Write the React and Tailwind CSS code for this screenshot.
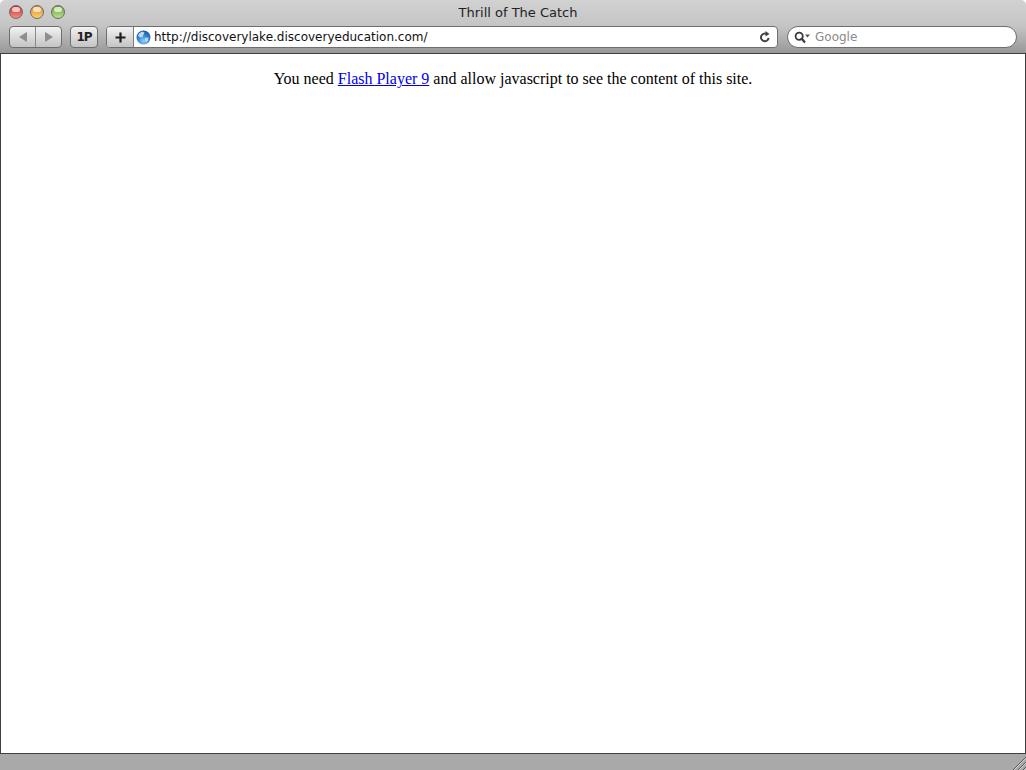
import React from 'react';

const chrome = { fontFamily: '"DejaVu Sans", sans-serif' };

const Light = ({ className }) => (
  <div className={`relative w-[14px] h-[14px] rounded-full border border-[#6b6b6b] ${className}`}>
    <div className="absolute left-[2px] top-[1px] w-[8px] h-[5px] rounded-full bg-white/70" />
  </div>
);

const Globe = () => (
  <svg width="15" height="15" viewBox="0 0 15 15" className="shrink-0">
    <defs>
      <radialGradient id="globe" cx="0.5" cy="0.75" r="0.8">
        <stop offset="0" stopColor="#8fd0f5" />
        <stop offset="0.55" stopColor="#2b7fd0" />
        <stop offset="1" stopColor="#14509a" />
      </radialGradient>
    </defs>
    <circle cx="7.5" cy="7.5" r="7" fill="url(#globe)" />
    <path d="M3 3.5 L6 1.5 L8.5 2.5 L7.5 4.5 L6.5 7 L4.5 7.5 L2 6 Z" fill="#dfe6ee" opacity="0.85" />
    <path d="M9 8 L12.5 7.5 L12 10.5 L10 12.5 L9 10.5 Z" fill="#dfe6ee" opacity="0.75" />
  </svg>
);

const App = () => {
  return (
    <div className="w-[1026px] h-[770px] flex flex-col overflow-hidden bg-white" style={chrome}>
      {/* window top: title + toolbar */}
      <div className="h-[54px] shrink-0 flex flex-col rounded-t-[5px] border-b border-[#3f3f3f] bg-gradient-to-b from-[#d2d2d2] via-[#c4c4c4] to-[#989898]">
        <div className="h-[24px] shrink-0 grid grid-cols-[1fr_auto_1fr] items-center pl-[9px]">
          <div className="flex gap-[7px]">
            <Light className="bg-gradient-to-b from-[#c8272d] to-[#f58a80]" />
            <Light className="bg-gradient-to-b from-[#d98a1c] to-[#fbd26a]" />
            <Light className="bg-gradient-to-b from-[#66a032] to-[#b9e08a]" />
          </div>
          <div className="text-[13px] leading-none text-[#222] pl-[1px]">Thrill of The Catch</div>
          <div />
        </div>

        <div className="flex items-center h-[24px] pl-[9px] pr-[9px] mt-[1px]">
          {/* back / forward */}
          <div className="flex w-[53px] h-[22px] rounded-[4px] border border-[#6e6e6e] bg-gradient-to-b from-[#f2f2f2] to-[#c4c4c4]">
            <div className="flex-1 flex items-center justify-center border-r border-[#8a8a8a]">
              <div className="w-0 h-0 border-y-[5px] border-y-transparent border-r-[8px] border-r-[#8e8e8e]" />
            </div>
            <div className="flex-1 flex items-center justify-center">
              <div className="w-0 h-0 border-y-[5px] border-y-transparent border-l-[8px] border-l-[#8e8e8e]" />
            </div>
          </div>

          <div className="ml-[8px] w-[28px] h-[22px] flex items-center justify-center rounded-[4px] border border-[#6e6e6e] bg-gradient-to-b from-[#f2f2f2] to-[#c4c4c4] text-[12px] font-bold tracking-[-1px] text-[#222]">
            1P
          </div>

          {/* address bar */}
          <div className="ml-[8px] w-[672px] h-[22px] flex rounded-[4px] border border-[#6e6e6e] bg-white overflow-hidden">
            <div className="w-[27px] shrink-0 flex items-center justify-center border-r border-[#7c7c7c] bg-gradient-to-b from-[#f2f2f2] to-[#c4c4c4]">
              <svg width="11" height="11" viewBox="0 0 11 11">
                <path d="M5.5 0.5 V10.5 M0.5 5.5 H10.5" stroke="#1c1c1c" strokeWidth="2.2" fill="none" />
              </svg>
            </div>
            <div className="flex-1 flex items-center pl-[2px] pr-[6px]">
              <Globe />
              <span className="ml-[3px] text-[12px] text-[#111] flex-1 whitespace-nowrap">http://discoverylake.discoveryeducation.com/</span>
              <svg width="12" height="12" viewBox="0 0 12 12">
                <path d="M9.6 6.8 A3.8 3.8 0 1 1 7.4 2.9" stroke="#444" strokeWidth="2" fill="none" />
                <path d="M6.5 0 L10.5 3 L6.5 5.5 Z" fill="#444" />
              </svg>
            </div>
          </div>

          {/* search */}
          <div className="ml-[9px] flex-1 h-[22px] flex items-center rounded-full border border-[#6e6e6e] bg-white pl-[6px]">
            <svg width="16" height="13" viewBox="0 0 16 13">
              <circle cx="5.2" cy="5.2" r="3.6" stroke="#3a3a3a" strokeWidth="1.8" fill="none" />
              <path d="M8 8 L11 11.5" stroke="#3a3a3a" strokeWidth="2.2" />
              <path d="M11 3.5 H16 L13.5 6.5 Z" fill="#555" />
            </svg>
            <span className="ml-[5px] text-[12px] text-[#8a8a8a]">Google</span>
          </div>
        </div>
      </div>

      {/* page */}
      <div className="flex-1 border-x border-[#3f3f3f] bg-white text-center text-black pt-[15px]" style={{ fontFamily: '"Liberation Serif", serif' }}>
        <p className="text-[16px] leading-[20px]">
          You need <a href="#" className="text-[#0000ee] underline">Flash Player 9</a> and allow javascript to see the content of this site.
        </p>
      </div>

      {/* status bar */}
      <div className="h-[17px] shrink-0 flex justify-end border-t border-[#3f3f3f] bg-[#a9a9a9]">
        <svg width="14" height="14" viewBox="0 0 14 14" className="self-end">
          <path d="M1 14 L14 1 M6 14 L14 6 M11 14 L14 11" stroke="#555" strokeWidth="1" />
          <path d="M2 14 L14 2 M7 14 L14 7 M12 14 L14 12" stroke="#d4d4d4" strokeWidth="1" />
        </svg>
      </div>
    </div>
  );
};

export default App;
